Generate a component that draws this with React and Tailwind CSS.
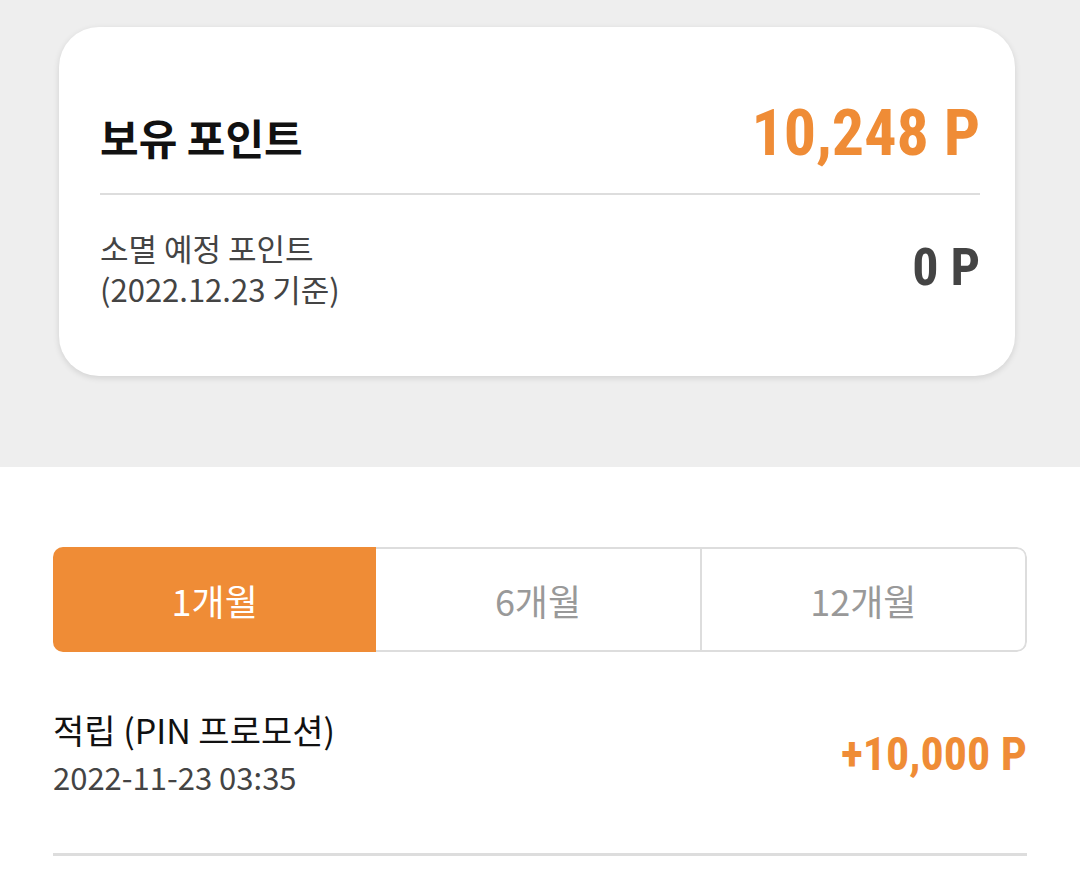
export default function App() {
  const kr = { fontFamily: '"Noto Sans CJK KR", "Noto Sans", sans-serif' };
  const num = { fontFamily: '"Liberation Sans Narrow", "Roboto Condensed", Roboto, "Noto Sans CJK KR", sans-serif' };

  return (
    <div className="w-[1080px] h-[874px] overflow-hidden bg-white" style={kr}>
      {/* top summary */}
      <div className="bg-[#eeeeee] h-[467px] pt-[27px] pl-[59px]">
        <div className="w-[956px] bg-white rounded-[40px] shadow-[0_2px_6px_rgba(0,0,0,0.12)] h-[349px] pl-[41px] pr-[35px] pt-[74px]">
          <div className="flex items-center justify-between h-[94px] border-b-2 border-[#dddddd] pb-[20px]">
            <span className="text-[42px] font-bold text-[#111111] leading-none">보유 포인트</span>
            <span className="text-[64px] font-bold text-[#ef8c36] leading-none mb-[6px]" style={num}>10,248 P</span>
          </div>
          <div className="flex items-center justify-between pt-[32px]">
            <div className="text-[31px] text-[#444444] leading-[41px]">
              <div>소멸 예정 포인트</div>
              <div>(2022.12.23 기준)</div>
            </div>
            <span className="text-[52px] font-bold text-[#444444] leading-none" style={num}>0 P</span>
          </div>
        </div>
      </div>

      {/* history */}
      <div className="px-[53px] pt-[80px]">
        <div className="flex h-[105px] rounded-[10px] overflow-hidden">
          <button className="flex-1 bg-[#ef8c36] text-white text-[36px] flex items-center justify-center">1개월</button>
          <button className="flex-1 border-2 border-l-0 border-[#dddddd] text-[#999999] text-[36px] flex items-center justify-center">6개월</button>
          <button className="flex-1 border-2 border-l-0 border-[#dddddd] rounded-r-[10px] text-[#999999] text-[36px] flex items-center justify-center">12개월</button>
        </div>

        <div className="flex items-center justify-between border-b-[3px] border-[#dddddd] pt-[56px] pb-[54px]">
          <div>
            <div className="text-[34px] text-[#111111] leading-[44px]">적립 (PIN 프로모션)</div>
            <div className="text-[31px] text-[#444444] leading-[44px] mt-[3px]">2022-11-23 03:35</div>
          </div>
          <span className="text-[46px] font-bold text-[#ef8c36] leading-none" style={num}>+10,000 P</span>
        </div>
      </div>
    </div>
  );
}
